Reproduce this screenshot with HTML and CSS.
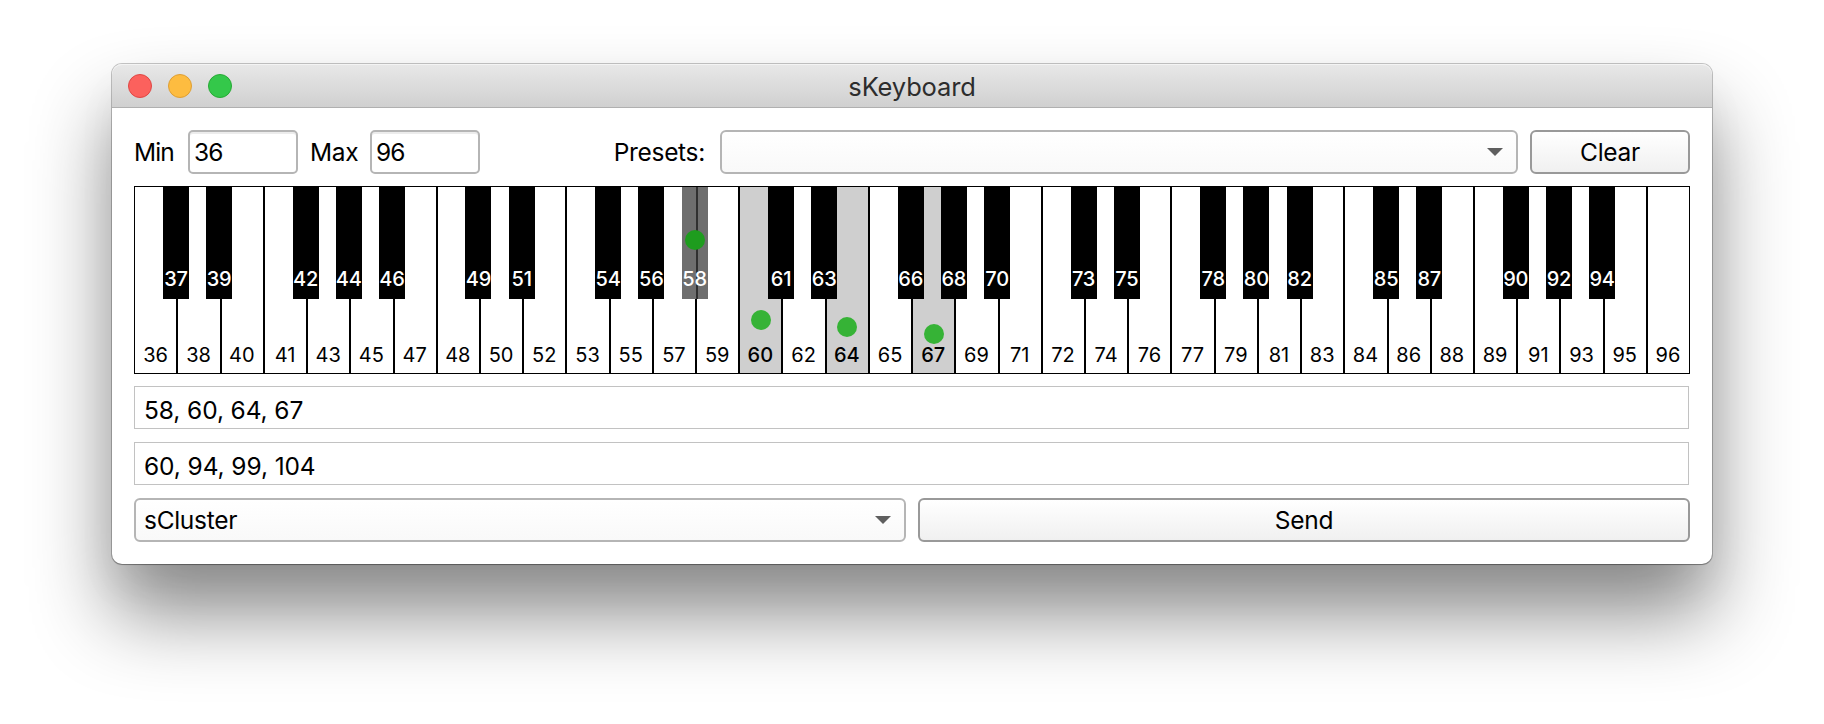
FILE: index.html
```html
<!DOCTYPE html>
<html lang="en">
<head>
<meta charset="utf-8">
<title>sKeyboard</title>
<link rel="stylesheet" href="styles.css">
</head>
<body>
<main class="window">
  <header class="titlebar">
    <div class="lights"><i class="light close"></i><i class="light minimize"></i><i class="light zoom"></i></div>
    <h1 class="title">sKeyboard</h1>
  </header>
  <section class="content">
    <div class="toolbar">
      <span class="label min-label">Min</span>
      <div class="input">36</div>
      <span class="label max-label">Max</span>
      <div class="input">96</div>
      <span class="label presets-label">Presets:</span>
      <div class="select presets"><svg class="arrow" width="16" height="8" viewBox="0 0 16 8"><path d="M0 0H16L8 8Z"/></svg></div>
      <div class="button clear">Clear</div>
    </div>
    <div class="keyboard" id="keyboard"></div>
    <div class="output">58, 60, 64, 67</div>
    <div class="output">60, 94, 99, 104</div>
    <div class="actions">
      <div class="select">sCluster<svg class="arrow" width="16" height="8" viewBox="0 0 16 8"><path d="M0 0H16L8 8Z"/></svg></div>
      <div class="button">Send</div>
    </div>
  </section>
</main>
<script src="keyboard.js"></script>
</body>
</html>
```
FILE: keyboard.js
```js
const FIRST = 36, LAST = 96;
// Held notes, with the vertical centre of each marker inside the keyboard.
const held = { 58: 53, 60: 133, 64: 140, 67: 146.5 };
const isBlack = n => [1, 3, 6, 8, 10].includes(n % 12);
const keyboard = document.getElementById('keyboard');

function makeKey(note, kind) {
  const key = document.createElement('div');
  key.className = kind;
  const label = document.createElement('span');
  label.textContent = note;
  key.append(label);
  if (note in held) {
    key.classList.add('held');
    const dot = document.createElement('i');
    dot.className = 'dot';
    dot.style.top = held[note] - 10 + 'px';
    key.append(dot);
  }
  return key;
}

for (let note = FIRST; note <= LAST; note++) {
  if (isBlack(note)) continue;
  const key = makeKey(note, 'white');
  if (note > FIRST && isBlack(note - 1)) key.append(makeKey(note - 1, 'black'));
  keyboard.append(key);
}
```
FILE: styles.css
```css
* { box-sizing: border-box; }
body {
  display: flow-root;
  margin: 0;
  height: 724px;
  overflow: hidden;
  background: #fff;
  color: #000;
  font: 24.5px/30px Inter, "Liberation Sans", sans-serif;
  letter-spacing: -.3px;
}
.window {
  width: 1600px;
  height: 500px;
  margin: 64px 0 0 112px;
  border-radius: 10px;
  background: #fff;
  box-shadow: 0 0 0 1px rgba(0,0,0,.22), 0 1px 1px rgba(0,0,0,.2), 0 50px 80px rgba(0,0,0,.46), 0 24px 44px rgba(0,0,0,.04);
}
.titlebar {
  position: relative;
  display: flex;
  align-items: center;
  justify-content: center;
  height: 44px;
  border-radius: 10px 10px 0 0;
  border-bottom: 1px solid #b0b0b0;
  background: linear-gradient(#e8e8e8, #d0d0d0);
  box-shadow: inset 0 1px #f4f4f4;
}
.title { margin: 2px 0 0; font-size: 25.5px; font-weight: 400; letter-spacing: -.15px; color: #2d2d2d; }
.lights { position: absolute; left: 16px; top: 10px; display: flex; gap: 16px; }
.light { width: 24px; height: 24px; border-radius: 50%; border: 1px solid; }
.close { background: #fc615d; border-color: #df4744; }
.minimize { background: #fdbc40; border-color: #de9f34; }
.zoom { background: #34c84a; border-color: #27aa35; }
.content { display: flex; flex-direction: column; padding: 22px; }
.toolbar { display: flex; height: 44px; }
.label { line-height: 44px; white-space: nowrap; }
.min-label { width: 54px; letter-spacing: -.9px; }
.max-label { width: 72px; padding-left: 12px; }
.presets-label { width: 240px; padding-right: 15px; text-align: right; }
.input {
  width: 110px;
  padding-left: 4px;
  border: 2px solid #b5b5b5;
  border-radius: 5px;
  line-height: 40px;
  letter-spacing: -.9px;
  box-shadow: inset 0 2px #ececec;
}
.select, .button { border-radius: 6px; line-height: 40px; }
.select {
  display: flex;
  align-items: center;
  justify-content: space-between;
  padding: 0 13px 0 8px;
  border: 2px solid #b5b5b5;
  background: linear-gradient(#fff, #f9f9f9);
}
.presets { width: 798px; justify-content: flex-end; }
.arrow { fill: #5f5f5f; }
.button { border: 2px solid #999; background: linear-gradient(#fff, #f0f0f0); text-align: center; }
.clear { width: 160px; margin-left: 12px; }
.keyboard {
  display: flex;
  height: 188px;
  margin-top: 12px;
  border: 1px solid #000;
  border-left: 0;
  letter-spacing: 0;
}
.white {
  position: relative;
  flex: 0 0 43.22px;
  border-left: 2px solid #000;
  left: -0.8px;
  font-size: 20px;
}
.white:first-child { border-left-width: 1px; left: 0; }
.white:last-child { flex-basis: 43.1px; }
.white > span { position: absolute; left: 0; right: 1px; bottom: 3px; text-align: center; }
.white.held { background: #cfcfcf; }
.white.held > span { font-weight: 550; }
.black {
  position: absolute;
  z-index: 1;
  top: 0;
  left: -15.5px;
  width: 26px;
  height: 112px;
  background: #000;
  color: #fff;
  font-weight: 550;
  letter-spacing: -.2px;
}
.black > span { position: absolute; left: -4px; right: -4px; bottom: 5px; text-align: center; }
.black.held { background: linear-gradient(90deg, #6e6e6e 14px, #303030 14px 16px, #6e6e6e 16px); }
.dot {
  position: absolute;
  left: calc(50% - 10px);
  width: 20px;
  height: 20px;
  border-radius: 50%;
  background: #36b336;
}
.black .dot { background: #1e9c1e; }
.output {
  height: 43px;
  margin: 12px 1px 0 0;
  padding-left: 9px;
  border: 1px solid #c2c2c2;
  line-height: 46px;
  letter-spacing: -.1px;
}
.output + .output { margin-top: 13px; }
.actions { display: grid; grid-template: 44px / 1fr 1fr; gap: 12px; margin-top: 13px; }
```
